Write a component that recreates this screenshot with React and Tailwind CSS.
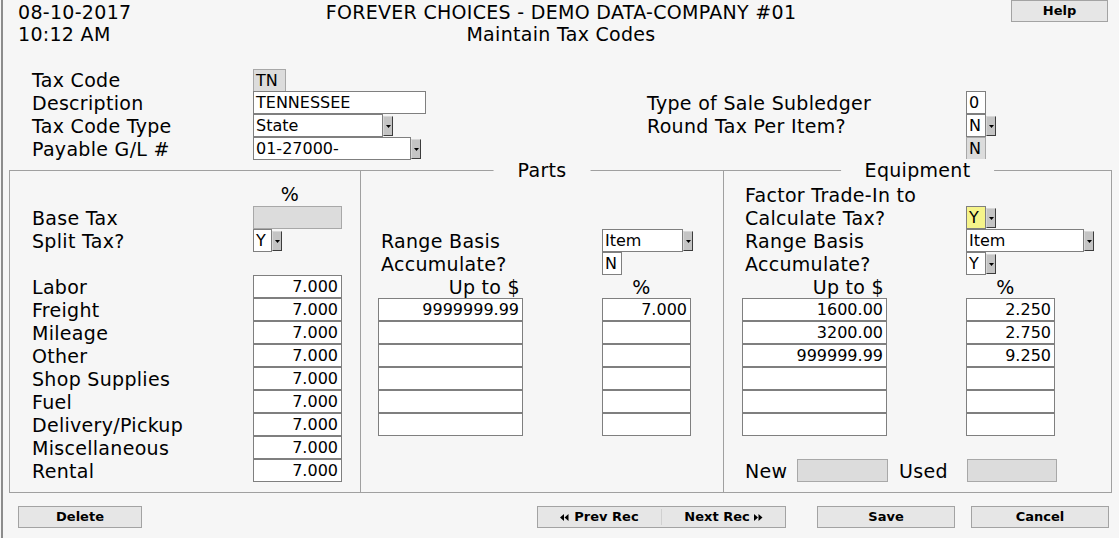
import React from 'react'

const FONT = { fontFamily: '"DejaVu Sans", Verdana, sans-serif' }

function Box({ w, value = '', align = 'left', tone = 'white', className = '' }) {
  const bg =
    tone === 'gray'
      ? 'bg-[#dcdcdc] border-[#a8a8a8]'
      : tone === 'yellow'
        ? 'bg-[#f6f48a] border-[#7f7f7f]'
        : 'bg-white border-[#7f7f7f]'
  return (
    <div
      className={`h-[23px] shrink-0 border ${bg} px-[2px] text-[16px] tracking-normal leading-[21px] whitespace-nowrap overflow-hidden ${
        align === 'right' ? 'text-right pr-[3px]' : ''
      } ${className}`}
      style={{ width: w }}
    >
      {value}
    </div>
  )
}

function Arrow() {
  return (
    <div className="mt-[2px] h-[20px] w-[10px] shrink-0 border border-[#3c3c3c] border-t-[#d8d8d8] border-l-[#d8d8d8] bg-[#c4c4c4] flex items-center justify-center">
      <svg width="5" height="3" viewBox="0 0 5 3">
        <path d="M0 0h5L2.5 3z" fill="#000" />
      </svg>
    </div>
  )
}

function Select({ w, value, tone }) {
  return (
    <div className="flex items-start">
      <Box w={w} value={value} tone={tone} />
      <Arrow />
    </div>
  )
}

function Row({ label, labelW = 221, children }) {
  return (
    <div className="flex h-[23px] items-start">
      <div className="shrink-0 leading-[24px] whitespace-nowrap" style={{ width: labelW }}>
        {label}
      </div>
      {children}
    </div>
  )
}

function Btn({ children, w, className = '' }) {
  return (
    <button
      type="button"
      className={`h-[22px] border border-[#a3a3a3] bg-[#e6e6e6] text-[13px] tracking-normal font-bold leading-[20px] text-black ${className}`}
      style={{ width: w }}
    >
      {children}
    </button>
  )
}

function Tri({ dir }) {
  return (
    <svg width="9" height="7" viewBox="0 0 9 7" className="inline-block">
      {dir === 'left' ? (
        <path d="M0 3.5L4 0v7zM4.5 3.5L8.5 0v7z" fill="#000" />
      ) : (
        <path d="M0 0l4 3.5L0 7zM4.5 0l4 3.5L4.5 7z" fill="#000" />
      )}
    </svg>
  )
}

const rates = ['Labor', 'Freight', 'Mileage', 'Other', 'Shop Supplies', 'Fuel', 'Delivery/Pickup', 'Miscellaneous', 'Rental']

function RangeTable({ rows }) {
  return (
    <>
      <div className="flex h-[23px] leading-[24px]">
        <div className="w-[145px] text-right pr-[3px] whitespace-nowrap">Up to $</div>
        <div className="w-[79px]" />
        <div className="w-[89px] text-center pr-[10px]">%</div>
      </div>
      <div className="flex">
        <div className="flex flex-col">
          {rows.map((r, i) => (
            <Box key={i} w={145} value={r[0]} align="right" />
          ))}
        </div>
        <div className="w-[79px]" />
        <div className="flex flex-col">
          {rows.map((r, i) => (
            <Box key={i} w={89} value={r[1]} align="right" />
          ))}
        </div>
      </div>
    </>
  )
}

export default function App() {
  return (
    <div
      className="w-[1119px] h-[538px] bg-[#f6f6f6] text-black text-[19px] tracking-[0.3px] overflow-hidden pl-px"
      style={FONT}
    >
      <div className="h-full border-l-2 border-[#8c8c8c]">
        {/* header */}
        <div className="grid grid-cols-[1fr_auto_1fr] pt-px">
          <div className="pl-[15px] leading-[22px]">
            <div>08-10-2017</div>
            <div>10:12 AM</div>
          </div>
          <div className="text-center leading-[22px]">
            <div>FOREVER CHOICES - DEMO DATA-COMPANY #01</div>
            <div>Maintain Tax Codes</div>
          </div>
          <div className="flex justify-end pr-[11px] -mt-px">
            <Btn w={97}>Help</Btn>
          </div>
        </div>

        {/* top form */}
        <div className="flex pl-[29px] mt-[23px]">
          <div className="w-[615px]">
            <Row label="Tax Code">
              <Box w={33} value="TN" tone="gray" className="h-[22px] mt-px leading-[20px]" />
            </Row>
            <Row label="Description">
              <Box w={173} value="TENNESSEE" />
            </Row>
            <Row label="Tax Code Type">
              <Select w={130} value="State" />
            </Row>
            <Row label="Payable G/L #">
              <Select w={158} value="01-27000-" />
            </Row>
          </div>
          <div>
            <div className="h-[23px]" />
            <Row label="Type of Sale Subledger" labelW={319}>
              <Box w={20} value="0" />
            </Row>
            <Row label="Round Tax Per Item?" labelW={319}>
              <Select w={20} value="N" />
            </Row>
            <Row label="" labelW={319}>
              <Box w={20} value="N" tone="gray" />
            </Row>
          </div>
        </div>

        {/* main panel */}
        <div className="ml-[6px] mt-[10px] w-[1103px] h-[323px] flex border-b border-l border-r border-[#a0a0a0]">
          <div className="w-[350px] border-t border-[#a0a0a0] pt-[12px] pl-[22px]">
            <div className="flex h-[23px] leading-[23px]">
              <div className="w-[221px]" />
              <div className="w-[88px] text-center pr-[14px]">%</div>
            </div>
            <Row label="Base Tax">
              <Box w={89} tone="gray" />
            </Row>
            <Row label="Split Tax?">
              <Select w={19} value="Y" />
            </Row>
            <div className="h-[23px]" />
            {rates.map((r) => (
              <Row key={r} label={r}>
                <Box w={89} value="7.000" align="right" />
              </Row>
            ))}
          </div>

          <div className="relative w-[363px] border-t border-l border-[#a0a0a0] pt-[12px]">
            <div className="absolute left-1/2 -top-[12px] -translate-x-1/2 bg-[#f6f6f6] px-[24px] leading-[23px]">
              Parts
            </div>
            <div className="h-[46px]" />
            <div className="pl-[20px]">
              <Row label="Range Basis">
                <Select w={81} value="Item" />
              </Row>
              <Row label="Accumulate?">
                <Box w={20} value="N" />
              </Row>
            </div>
            <div className="pl-[17px]">
              <RangeTable rows={[['9999999.99', '7.000'], ['', ''], ['', ''], ['', ''], ['', ''], ['', '']]} />
            </div>
          </div>

          <div className="relative flex-1 border-t border-l border-[#a0a0a0] pt-[12px]">
            <div className="absolute left-1/2 -top-[12px] -translate-x-1/2 bg-[#f6f6f6] px-[24px] leading-[23px]">
              Equipment
            </div>
            <div className="pl-[21px]">
              <Row label="Factor Trade-In to" />
              <Row label="Calculate Tax?">
                <Select w={20} value="Y" tone="yellow" />
              </Row>
              <Row label="Range Basis">
                <Select w={118} value="Item" />
              </Row>
              <Row label="Accumulate?">
                <Select w={20} value="Y" />
              </Row>
            </div>
            <div className="pl-[18px]">
              <RangeTable
                rows={[['1600.00', '2.250'], ['3200.00', '2.750'], ['999999.99', '9.250'], ['', ''], ['', ''], ['', '']]}
              />
            </div>
            <div className="flex h-[23px] items-start pl-[21px] mt-[23px]">
              <div className="w-[52px] leading-[24px]">New</div>
              <Box w={91} tone="gray" />
              <div className="w-[79px] pl-[11px] leading-[24px]">Used</div>
              <Box w={90} tone="gray" />
            </div>
          </div>
        </div>

        {/* bottom buttons */}
        <div className="flex mt-[13px] pl-[15px]">
          <Btn w={124}>Delete</Btn>
          <div className="ml-[395px] flex h-[22px] w-[249px] border border-[#a3a3a3] bg-[#e6e6e6] text-[13px] tracking-normal font-bold leading-[20px]">
            <div className="flex-1 flex items-center justify-center gap-[5px] border-r border-[#d0d0d0] my-[2px]">
              <Tri dir="left" />
              <span>Prev&nbsp;Rec</span>
            </div>
            <div className="flex-1 flex items-center justify-center gap-[4px] my-[2px]">
              <span>Next&nbsp;Rec</span>
              <Tri dir="right" />
            </div>
          </div>
          <Btn w={138} className="ml-[31px]">Save</Btn>
          <Btn w={138} className="ml-[16px]">Cancel</Btn>
        </div>
      </div>
    </div>
  )
}
